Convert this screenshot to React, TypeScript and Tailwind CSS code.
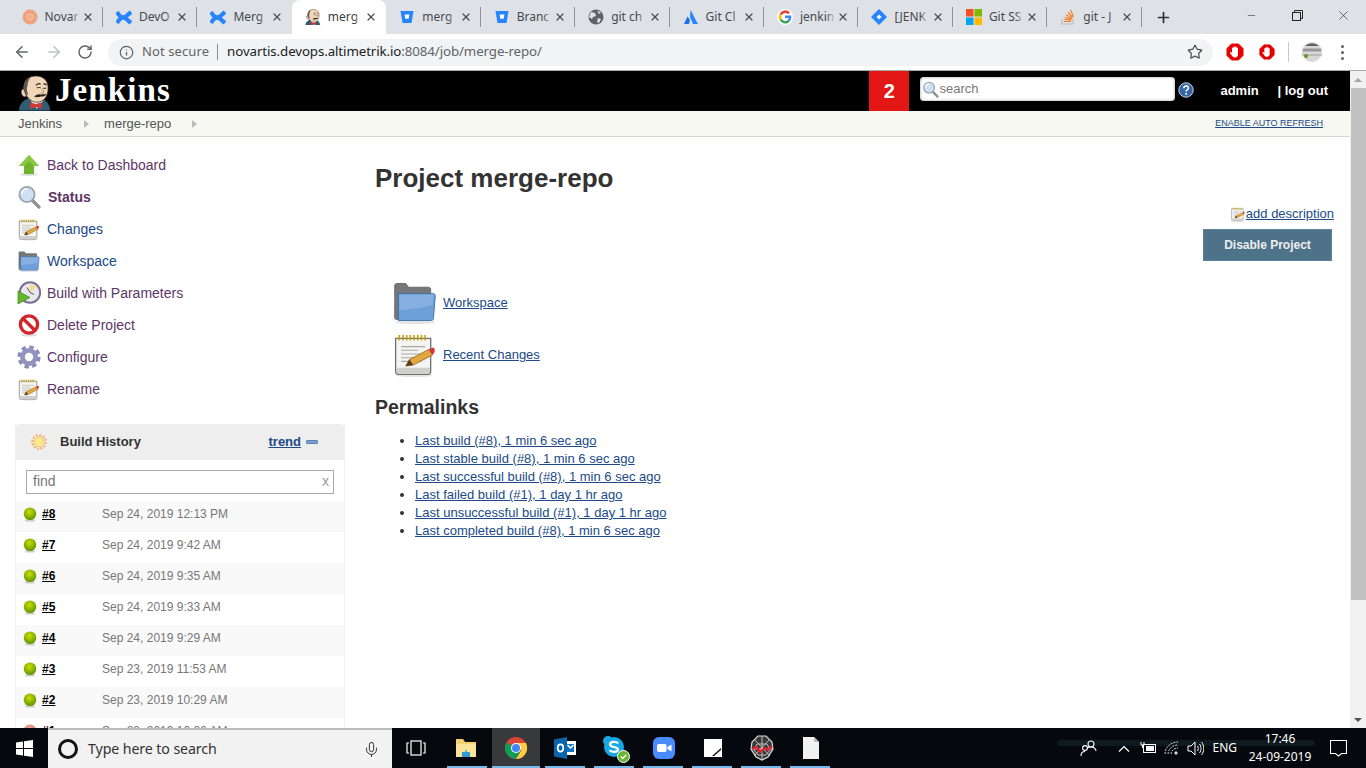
import React from "react"
import { ArrowLeft, ArrowRight, RotateCw, Info, Star, X, Plus, Minus, Mic } from "lucide-react"

const sans = "font-['Liberation_Sans',Arial,sans-serif]"
const ui = "font-['Noto_Sans',sans-serif]"

function Butler({ size = 36 }: { size?: number }) {
  return (
    <svg width={size} height={size * 1.05} viewBox="0 0 36 38">
      <path d="M1 38c0-7 4-11 10-13l14 0c5 2 9 6 9 13z" fill="#335c73" stroke="#1d3645" strokeWidth=".6" />
      <path d="M13 27h14l-7 9z" fill="#fff" />
      <path d="M13 29l6 2 6-2v7l-6-2-6 2z" fill="#d33833" />
      <path d="M7 15c-3-1-5 2-3 6 1 2 3 3 5 2z" fill="#f0d0b0" stroke="#2b2320" strokeWidth=".8" />
      <path d="M6 14C6 5 12 1 19 1c8 0 13 5 13 13 0 9-5 15-12 15-7 0-12-6-14-15z" fill="#f2d6b8" stroke="#2b2320" strokeWidth=".8" />
      <path d="M6 16C5 9 8 3 14 1.500c-3 3-4 7-4 10-1 2-1 6 1 10-3-1-4-3-5-5.500z" fill="#5d5651" />
      <path d="M19 11c2-2 4-2 5-1M27 10c1-1 3 0 3 1" stroke="#2b2320" strokeWidth="1.300" fill="none" />
      <path d="M20 14c1-1 3-1 4 0M27 14l3 0" stroke="#2b2320" strokeWidth="1.100" fill="none" />
      <path d="M26 14c0 2 2 4 1 5-1 1-2 1-3 0" stroke="#b8835f" strokeWidth="1" fill="none" />
      <path d="M17 23c3-2 5-3 7-2 2-1 4 0 6-1-1 3-4 3-6 3-2 1-5 1-7 0z" fill="#2b2320" />
    </svg>
  )
}

function GreenUp() {
  return (
    <svg width="24" height="24" viewBox="0 0 24 24">
      <ellipse cx="12" cy="21.500" rx="9" ry="1.500" fill="#ddd" />
      <path d="M12 2l10 11h-5v8H7v-8H2z" fill="#6fb52c" />
      <path d="M12 2l10 11h-5l-5-5-5 5H2z" fill="#8ac942" />
    </svg>
  )
}

function Magnifier({ size = 24 }: { size?: number }) {
  return (
    <svg width={size} height={size} viewBox="0 0 24 24">
      <path d="M14 14l8 8" stroke="#8a8f94" strokeWidth="3.200" strokeLinecap="round" />
      <circle cx="10" cy="9.500" r="7.600" fill="#cfe0f2" stroke="#9aa6b2" strokeWidth="1.800" />
      <path d="M5 9c0-3 2-5 5-5" stroke="#fff" strokeWidth="1.600" fill="none" />
    </svg>
  )
}

function Notepad({ size = 24 }: { size?: number }) {
  return (
    <svg width={size} height={size} viewBox="-2 -2 52 52">
      <ellipse cx="23" cy="47" rx="20" ry="2" fill="#e4e4e4" />
      <path d="M3 7h38v36c0 2-1 3-3 3H6c-2 0-3-1-3-3z" fill="#f4f4f2" stroke="#6f6f6f" strokeWidth="1.400" />
      <path d="M3.700 39h36.600v4c0 2-1 2.300-2.300 2.300H6c-1.500 0-2.300-.3-2.300-2.300z" fill="#cfcfcd" />
      <path d="M7 3.500v6M11 3.500v6M15 3.500v6M19 3.500v6M23 3.500v6M27 3.500v6M31 3.500v6M35 3.500v6" stroke="#c4a000" strokeWidth="1.700" />
      <path d="M9 16h26M9 20h18M9 24h26M9 28h14M9 32h22" stroke="#a8a8a8" strokeWidth="1.200" />
      <path d="M14 37l4-7 21-11 4 6-21 11z" fill="#e0a840" stroke="#8f5902" strokeWidth=".8" />
      <path d="M39 19l4-2c2 0 3 3 2 5l-2 3z" fill="#d9343a" />
      <path d="M14 37l4-7 4 6z" fill="#553a1e" />
    </svg>
  )
}

function Folder({ size = 24 }: { size?: number }) {
  return (
    <svg width={size} height={size} viewBox="-2 -2 52 52">
      <ellipse cx="24" cy="46" rx="22" ry="2" fill="#e4e4e4" />
      <path d="M2 6c0-1 1-2 2-2h10l3 4h22c1 0 2 1 2 2v33H4c-1 0-2-1-2-2z" fill="#75777a" stroke="#555" strokeWidth=".8" />
      <path d="M6 15h38c1 0 2 1 2 2l-2 25c0 1-1 2-2 2H6z" fill="#6f9fd8" stroke="#3e6fa8" strokeWidth="1" />
      <path d="M7 16h37l-1 11c-12 4-24 4-36 6z" fill="#86b0e0" />
    </svg>
  )
}

function BuildClock() {
  return (
    <svg width="24" height="24" viewBox="0 0 24 24">
      <circle cx="13" cy="11.500" r="10.200" fill="#e9e7ef" stroke="#77708f" strokeWidth="2" />
      <path d="M13 11.500V3.500a8 8 0 0 1 6 2.700z" fill="#f4dc80" />
      <path d="M13 11.500l4 2M13 11.500l-3-5" stroke="#555" strokeWidth="1" />
      <path d="M1 10l12 6.500L1 23z" fill="#62b52e" stroke="#3f8a12" strokeWidth=".7" />
    </svg>
  )
}

function NoSign() {
  return (
    <svg width="24" height="24" viewBox="0 0 24 24">
      <ellipse cx="12" cy="22" rx="8" ry="1.600" fill="#ddd" />
      <circle cx="12" cy="11.500" r="8.600" fill="#fff" stroke="#d3242a" strokeWidth="3.400" />
      <path d="M6 5.500l12 12" stroke="#d3242a" strokeWidth="3.400" />
    </svg>
  )
}

function Gear() {
  return (
    <svg width="24" height="24" viewBox="0 0 24 24">
      <circle cx="12" cy="12" r="9.400" fill="none" stroke="#8c8cb8" strokeWidth="4.400" strokeDasharray="4.200 3.180" />
      <circle cx="12" cy="12" r="6.600" fill="none" stroke="#9393bf" strokeWidth="4.800" />
      <circle cx="12" cy="12" r="3.600" fill="#fff" />
    </svg>
  )
}

function Sun() {
  return (
    <svg width="16" height="16" viewBox="0 0 16 16">
      <circle cx="8" cy="8" r="6.600" fill="none" stroke="#f6b26b" strokeWidth="2.400" strokeDasharray="2 1.450" />
      <circle cx="8" cy="8" r="4.600" fill="#fbe98a" stroke="#f2c76a" strokeWidth=".8" />
    </svg>
  )
}

function Ball({ red = false }: { red?: boolean }) {
  const id = red ? "ballRed" : "ballGreen"
  return (
    <svg width="14" height="15" viewBox="0 0 14 15" className="shrink-0 mt-[2px]">
      <defs>
        <radialGradient id={id} cx="45%" cy="35%" r="65%">
          <stop offset="0" stopColor={red ? "#f0a8a0" : "#c8e000"} />
          <stop offset="1" stopColor={red ? "#d87870" : "#5f9400"} />
        </radialGradient>
      </defs>
      <ellipse cx="7" cy="13.400" rx="5" ry="1.200" fill="#ccc" />
      <circle cx="7" cy="6.800" r="6.300" fill={`url(#${id})`} />
    </svg>
  )
}

/* tab favicons */
function Confluence() {
  return (
    <svg width="17" height="17" viewBox="0 0 16 16" fill="none" stroke="#2684ff" strokeWidth="4.200">
      <path d="M1 13.500c3-5 5-6 7-5.500s4 3 7 5.500" />
      <path d="M1 2.500c3 5 5 6 7 5.500s4-3 7-5.500" />
    </svg>
  )
}

function Bitbucket() {
  return (
    <svg width="16" height="16" viewBox="0 0 16 16">
      <path d="M1.500 2h13l-2 12h-9z" fill="#2684ff" />
      <path d="M5.600 5.500h4.800l-.7 4.200H6.300z" fill="#fff" />
    </svg>
  )
}

function TabIcon({ kind }: { kind: string }) {
  if (kind === "orange")
    return (
      <svg width="16" height="16" viewBox="0 0 16 16">
        <circle cx="8" cy="8" r="7.500" fill="#ee9f7c" />
        <circle cx="8" cy="8" r="3" fill="none" stroke="#f7c9b2" strokeWidth="1" />
        <path d="M8 1v14M1 8h14M3 3l10 10M13 3L3 13" stroke="#f4b699" strokeWidth=".6" />
      </svg>
    )
  if (kind === "confluence") return <Confluence />
  if (kind === "jenkins") return <Butler size={16} />
  if (kind === "bitbucket") return <Bitbucket />
  if (kind === "globe")
    return (
      <svg width="16" height="16" viewBox="0 0 16 16">
        <circle cx="8" cy="8" r="7.500" fill="#5f6368" />
        <path d="M3 3l4 1 1 3-3 1-1 2-3-2zM10 9l3 1-2 4-2-1zM9 1.500l4 2-2 1.500z" fill="#dee1e6" />
      </svg>
    )
  if (kind === "atlassian")
    return (
      <svg width="16" height="16" viewBox="0 0 16 16">
        <path d="M7.500 1c2 3 4.500 9 7.500 14h-5l-3-7z" fill="#2684ff" />
        <path d="M4.500 7.500L1 15h5l1-4z" fill="#1f6fe0" />
      </svg>
    )
  if (kind === "google")
    return (
      <svg width="16" height="16" viewBox="0 0 16 16" fill="none" strokeWidth="2.600">
        <circle cx="8" cy="8" r="8" fill="#fff" />
        <path d="M12 4.400A5 5 0 0 0 3.700 5.500" stroke="#ea4335" />
        <path d="M3.700 5.500a5 5 0 0 0 0 5" stroke="#fbbc05" />
        <path d="M3.700 10.500a5 5 0 0 0 8 1.300" stroke="#34a853" />
        <path d="M11.700 11.800A5 5 0 0 0 13 7.800H8" stroke="#4285f4" />
      </svg>
    )
  if (kind === "jira")
    return (
      <svg width="16" height="16" viewBox="0 0 16 16">
        <path d="M8 0l8 8-8 8-8-8z" fill="#2684ff" />
        <path d="M8 5.500L10.500 8 8 10.500 5.500 8z" fill="#fff" />
      </svg>
    )
  if (kind === "ms")
    return (
      <svg width="16" height="16" viewBox="0 0 16 16">
        <rect width="7.500" height="7.500" fill="#f25022" />
        <rect x="8.500" width="7.500" height="7.500" fill="#7fba00" />
        <rect y="8.500" width="7.500" height="7.500" fill="#00a4ef" />
        <rect x="8.500" y="8.500" width="7.500" height="7.500" fill="#ffb900" />
      </svg>
    )
  return (
    <svg width="16" height="16" viewBox="0 0 16 16" fill="none">
      <path d="M2 10v5h11v-5" stroke="#bcbbbb" strokeWidth="1.200" />
      <path d="M4 12.500h7M4.200 10.500l7 .6M4.800 8.300l6.800 1.800M6 5.800l6 3.400M8 3.500l4.800 5M10.500 1l3 6.500" stroke="#f48024" strokeWidth="1.200" />
    </svg>
  )
}

const tabs = [
  { icon: "orange", title: "Novar" },
  { icon: "confluence", title: "DevO" },
  { icon: "confluence", title: "Merg" },
  { icon: "jenkins", title: "merg", active: true },
  { icon: "bitbucket", title: "merg" },
  { icon: "bitbucket", title: "Branc" },
  { icon: "globe", title: "git ch" },
  { icon: "atlassian", title: "Git Cl" },
  { icon: "google", title: "jenkin" },
  { icon: "jira", title: "[JENK" },
  { icon: "ms", title: "Git SS" },
  { icon: "so", title: "git - J" },
]

function TabStrip() {
  return (
    <div className={`h-[34px] shrink-0 bg-[#dee1e6] flex items-end pl-[8.5px] ${ui}`}>
      {tabs.map((t, i) => {
        const hideSep = t.active || tabs[i + 1]?.active
        return (
          <div
            key={i}
            className={`w-[94.45px] h-[34px] flex items-center pl-[13px] pr-[9px] ${t.active ? "bg-white rounded-t-[8px]" : ""}`}
          >
            <div className="w-[16px] h-[16px] shrink-0 flex items-center justify-center">
              <TabIcon kind={t.icon} />
            </div>
            <div className={`relative w-[36px] ml-[7px] whitespace-nowrap text-[12px] ${t.active ? "text-[#3c4043]" : "text-[#45494e]"}`}>
              {t.title}
              <div className={`absolute inset-y-0 right-0 w-[10px] bg-linear-to-r from-transparent ${t.active ? "to-white" : "to-[#dee1e6]"}`} />
            </div>
            <X size={12} strokeWidth={2.4} className="ml-auto text-[#4a4d51] shrink-0" />
            {!hideSep && <div className="w-px h-[20px] bg-[#8f9297] ml-[8px] mr-[-9px] shrink-0" />}
          </div>
        )
      })}
      <div className="h-[34px] w-[30px] ml-[7px] flex items-center justify-center text-[#2f3134]">
        <Plus size={17} strokeWidth={2.4} />
      </div>
      <div className="ml-auto h-[34px] flex items-start text-[#222]">
        <div className="w-[46px] h-[30px] flex items-center justify-center">
          <Minus size={11} strokeWidth={1.2} />
        </div>
        <div className="w-[46px] h-[30px] flex items-center justify-center">
          <svg width="11" height="11" viewBox="0 0 11 11" fill="none" stroke="#222" strokeWidth="1">
            <rect x="0.500" y="2.500" width="8" height="8" />
            <path d="M2.500 2.500v-2h8v8h-2" />
          </svg>
        </div>
        <div className="w-[46px] h-[30px] flex items-center justify-center">
          <X size={15} strokeWidth={1} />
        </div>
      </div>
    </div>
  )
}

function StopHand({ size = 18 }: { size?: number }) {
  return (
    <svg width={size} height={size} viewBox="0 0 18 18">
      <path d="M5.500 1h7L17 5.500v7L12.500 17h-7L1 12.500v-7z" fill="#e60000" stroke="#e60000" />
      <path
        d="M6 8V5a.8.8 0 0 1 1.500 0V4a.8.8 0 0 1 1.500 0v0a.8.8 0 0 1 1.500 0V5a.8.8 0 0 1 1.500 0v6c0 2-1 3.500-3 3.500-2 0-2.500-1-3.500-2.500L4 10c-.5-1 .7-1.500 1.300-.7L6 10z"
        fill="#fff"
      />
    </svg>
  )
}

function Toolbar() {
  return (
    <div className={`h-[37px] shrink-0 bg-white flex items-center border-b border-[#a8a8a8] ${ui}`}>
      <div className="w-[108px] flex items-center pl-[13px] gap-[14px] shrink-0">
        <ArrowLeft size={18} strokeWidth={2} className="text-[#5f6368]" />
        <ArrowRight size={18} strokeWidth={2} className="text-[#bdc1c6]" />
        <RotateCw size={16} strokeWidth={2.2} className="text-[#5f6368]" />
      </div>
      <div className="w-[1105px] h-[27px] rounded-full bg-[#f1f3f4] flex items-center shrink-0">
        <Info size={15} strokeWidth={2} className="ml-[11px] text-[#5f6368] shrink-0" />
        <span className="ml-[8px] text-[13px] text-[#5f6368] tracking-[0.1px]">Not secure</span>
        <div className="w-px h-[16px] bg-[#8a8d91] ml-[8px]" />
        <span className="ml-[9px] text-[13.3px] text-[#202124] tracking-[-0.1px] whitespace-nowrap">
          novartis.devops.altimetrik.io<span className="text-[#5f6368]">:8084/job/merge-repo/</span>
        </span>
        <Star size={16} strokeWidth={1.8} className="ml-auto mr-[10px] text-[#4a4d51]" />
      </div>
      <div className="flex items-center flex-1 pl-[13px]">
        <StopHand />
        <div className="ml-[15px]">
          <StopHand size={16} />
        </div>
        <div className="w-px h-[20px] bg-[#c8c8c8] ml-[13px]" />
        <svg width="20" height="20" viewBox="0 0 20 20" className="ml-[13px]">
          <circle cx="10" cy="10" r="10" fill="#d8d8d6" />
          <path d="M3 4a10 10 0 0 1 14 0z" fill="#5f5f5f" />
          <path d="M1 6.500h18l.6 3H.4z" fill="#999" />
          <path d="M0 12h20l-.5 2H.5z" fill="#bbb" />
          <circle cx="4" cy="14" r="2" fill="#5a9a2a" />
        </svg>
        <div className="ml-[19px] flex flex-col gap-[3px]">
          <div className="w-[3px] h-[3px] rounded-full bg-[#5f6368]" />
          <div className="w-[3px] h-[3px] rounded-full bg-[#5f6368]" />
          <div className="w-[3px] h-[3px] rounded-full bg-[#5f6368]" />
        </div>
      </div>
    </div>
  )
}

function JenkinsHeader() {
  return (
    <div className={`h-[40px] shrink-0 bg-black flex items-center text-white ${sans}`}>
      <div className="ml-[18px] h-[40px] flex items-end">
        <Butler size={34} />
      </div>
      <span className="ml-[3px] mt-[-3px] font-['Liberation_Serif',serif] font-bold text-[33px] leading-[40px] tracking-[1.1px]">Jenkins</span>
      <div className="ml-auto w-[40px] h-[40px] bg-[#e41717] flex items-center justify-center font-bold text-[20px]">2</div>
      <div className="ml-[11px] w-[255px] h-[24px] bg-white rounded-[4px] flex items-center pl-[2px] shadow-[inset_0_0_3px_#999] mt-[-4px]">
        <Magnifier size={17} />
        <span className="text-[13px] text-[#777]">search</span>
      </div>
      <svg width="16" height="16" viewBox="0 0 16 16" className="ml-[3px] mt-[-3px]">
        <circle cx="8" cy="8" r="7.200" fill="#3465a4" stroke="#c8d4e6" strokeWidth="1" />
        <path d="M5.800 6.200c0-3 4.600-3 4.600-.2 0 2-2.300 1.800-2.300 3.600" fill="none" stroke="#fff" strokeWidth="1.600" />
        <circle cx="8.100" cy="11.800" r="1" fill="#fff" />
      </svg>
      <span className="ml-[26px] font-bold text-[13px] w-[57px]">admin</span>
      <span className="font-bold text-[13px] mr-[22px]">| log out</span>
    </div>
  )
}

function Breadcrumb() {
  const Tri = () => <div className="w-0 h-0 border-y-[4px] border-y-transparent border-l-[5px] border-l-[#bbb]" />
  return (
    <div className={`h-[26px] shrink-0 bg-[#f6f8f1] border-b border-[#d3d7cf] flex items-center pl-[18px] pr-[27px] text-[13px] text-[#555] ${sans}`}>
      <span>Jenkins</span>
      <div className="ml-[22px] mr-[15px]"><Tri /></div>
      <span>merge-repo</span>
      <div className="ml-[21px]"><Tri /></div>
      <a className="ml-auto text-[9px] text-[#204a87] underline">ENABLE AUTO REFRESH</a>
    </div>
  )
}

const sideItems = [
  { icon: <GreenUp />, label: "Back to Dashboard", color: "text-[#5c3566]" },
  { icon: <Magnifier />, label: "Status", color: "text-[#5c3566] font-bold pl-[1px]" },
  { icon: <Notepad />, label: "Changes", color: "text-[#204a87]" },
  { icon: <Folder />, label: "Workspace", color: "text-[#204a87]" },
  { icon: <BuildClock />, label: "Build with Parameters", color: "text-[#5c3566]" },
  { icon: <NoSign />, label: "Delete Project", color: "text-[#5c3566]" },
  { icon: <Gear />, label: "Configure", color: "text-[#5c3566]" },
  { icon: <Notepad />, label: "Rename", color: "text-[#5c3566]" },
]

const builds = [
  { n: "#8", d: "Sep 24, 2019 12:13 PM" },
  { n: "#7", d: "Sep 24, 2019 9:42 AM" },
  { n: "#6", d: "Sep 24, 2019 9:35 AM" },
  { n: "#5", d: "Sep 24, 2019 9:33 AM" },
  { n: "#4", d: "Sep 24, 2019 9:29 AM" },
  { n: "#3", d: "Sep 23, 2019 11:53 AM" },
  { n: "#2", d: "Sep 23, 2019 10:29 AM" },
  { n: "#1", d: "Sep 23, 2019 10:26 AM", red: true },
]

function Sidebar() {
  return (
    <div className="w-[345px] shrink-0 pl-[15px] pt-[12px]">
      {sideItems.map((it) => (
        <div key={it.label} className="h-[32px] flex items-center pl-[2px]">
          <div className="w-[24px] h-[24px] shrink-0">{it.icon}</div>
          <span className={`ml-[6px] text-[14px] ${it.color}`}>{it.label}</span>
        </div>
      ))}
      <div className="mt-[19px] border-x border-[#f0f0f0]">
        <div className="h-[36px] bg-[#eeeeee] rounded-t-[5px] flex items-center pl-[16px] mx-[-1px]">
          <Sun />
          <span className="ml-[13px] text-[13px] font-bold text-[#333]">Build History</span>
          <a className="ml-auto text-[13px] font-bold text-[#204a87] underline">trend</a>
          <div className="ml-[5px] mr-[27px] w-[12px] h-[4px] rounded-[1px] bg-[#7ea1cc] border border-[#5d83b3]" />
        </div>
        <div className="h-[41px] flex items-start pl-[10px] pt-[10px] pr-[10px]">
          <div className="w-full h-[24px] border border-[#aaaaaa] flex items-center justify-between pl-[6px] pr-[4px] pb-[1px] text-[14px] text-[#777]">
            <span>find</span>
            <span className="text-[#999]">x</span>
          </div>
        </div>
        {builds.map((b, i) => (
          <div key={b.n} className={`h-[31px] flex items-start pt-[4px] pl-[7px] text-[12px] ${i % 2 === 0 ? "bg-[#f9f9f9]" : "bg-white"}`}>
            <Ball red={b.red} />
            <a className="ml-[5px] w-[60px] font-bold text-black underline">{b.n}</a>
            <span className="text-[#777]">{b.d}</span>
          </div>
        ))}
      </div>
    </div>
  )
}

const permalinks = [
  "Last build (#8), 1 min 6 sec ago",
  "Last stable build (#8), 1 min 6 sec ago",
  "Last successful build (#8), 1 min 6 sec ago",
  "Last failed build (#1), 1 day 1 hr ago",
  "Last unsuccessful build (#1), 1 day 1 hr ago",
  "Last completed build (#8), 1 min 6 sec ago",
]

function MainPanel() {
  return (
    <div className="flex-1 min-w-0 pl-[30px] pr-[16px] pt-[26px]">
      <h1 className="text-[26px] leading-[30px] font-bold text-[#333]">Project merge-repo</h1>
      <div className="mt-[12px] h-[18px] flex items-center justify-end">
        <Notepad size={16} />
        <a className="text-[13px] text-[#204a87] underline">add description</a>
      </div>
      <div className="mt-[6px] flex justify-end pr-[2px]">
        <div className="w-[129px] h-[32px] bg-[#4d728a] border border-[#5d8299] flex items-center justify-center text-[12px] font-bold text-[#eeeeee]">
          Disable Project
        </div>
      </div>
      <div className="mt-[15px] h-[52px] flex items-center pl-[16px]">
        <Folder size={48} />
        <a className="ml-[4px] pt-[2px] text-[13px] text-[#204a87] underline">Workspace</a>
      </div>
      <div className="h-[52px] flex items-center pl-[16px]">
        <Notepad size={48} />
        <a className="ml-[4px] pt-[2px] text-[13px] text-[#204a87] underline">Recent Changes</a>
      </div>
      <h2 className="mt-[15px] text-[19.500px] leading-[24px] font-bold text-[#333]">Permalinks</h2>
      <ul className="mt-[13px] list-disc pl-[40px] text-[#333]">
        {permalinks.map((p) => (
          <li key={p} className="h-[18px] leading-[18px] text-[13px]">
            <a className="text-[#204a87] underline">{p}</a>
          </li>
        ))}
      </ul>
    </div>
  )
}

function Scrollbar() {
  return (
    <div className="w-[16px] shrink-0 bg-[#f1f1f1] flex flex-col items-center">
      <div className="h-[17px] flex items-center justify-center">
        <div className="w-0 h-0 border-x-[4px] border-x-transparent border-b-[4px] border-b-[#a3a3a3]" />
      </div>
      <div className="w-[15px] ml-[1px] h-[512px] bg-[#c1c1c1]" />
      <div className="mt-auto h-[17px] flex items-center justify-center">
        <div className="w-0 h-0 border-x-[4px] border-x-transparent border-t-[4px] border-t-[#505050]" />
      </div>
    </div>
  )
}

/* taskbar icons */
function ChromeIcon() {
  return (
    <svg width="24" height="24" viewBox="0 0 24 24">
      <circle cx="12" cy="12" r="11" fill="#db4437" />
      <path d="M12 12L2.500 6.500A11 11 0 0 0 12 23l5-9z" fill="#0f9d58" />
      <path d="M12 7h10a11 11 0 0 1-10 16l5.500-9z" fill="#ffcd40" />
      <circle cx="12" cy="12" r="5" fill="#fff" />
      <circle cx="12" cy="12" r="4" fill="#4285f4" />
    </svg>
  )
}

function OutlookIcon() {
  return (
    <svg width="24" height="24" viewBox="0 0 24 24">
      <path d="M12 5h11v14H12z" fill="#fff" />
      <path d="M14 8h7v8h-7z" fill="#1173c5" />
      <path d="M14.500 9l3 3 3-3" stroke="#fff" strokeWidth="1.500" fill="none" />
      <path d="M1 3.500L14 1v22L1 20.500z" fill="#0a64ad" />
      <ellipse cx="7.500" cy="12" rx="2.800" ry="3.600" fill="none" stroke="#fff" strokeWidth="1.700" />
    </svg>
  )
}

function SkypeIcon() {
  return (
    <div className="relative w-[26px] h-[26px]">
      <svg width="24" height="24" viewBox="0 0 24 24">
        <circle cx="12" cy="12" r="10" fill="#1aa7e6" />
        <circle cx="6" cy="6" r="5" fill="#1aa7e6" />
        <circle cx="18" cy="18" r="5" fill="#1aa7e6" />
        <path d="M16 8.500c-1-2-8-2.500-8 1 0 3.500 8 1.500 8 5 0 3-7 3-8.500.5" fill="none" stroke="#fff" strokeWidth="2.200" />
      </svg>
      <svg width="13" height="13" viewBox="0 0 13 13" className="absolute right-[-2px] bottom-[-2px]">
        <circle cx="6.500" cy="6.500" r="6" fill="#6ab42f" stroke="#fff" strokeWidth="1" />
        <path d="M3.800 6.500l2 2 3.500-3.800" stroke="#fff" strokeWidth="1.300" fill="none" />
      </svg>
    </div>
  )
}

function ZoomIcon() {
  return (
    <svg width="24" height="24" viewBox="0 0 24 24">
      <rect x="1" y="1" width="22" height="22" rx="6" fill="#4a8cff" />
      <rect x="5" y="8" width="9.500" height="8" rx="1.800" fill="#fff" />
      <path d="M15.500 11l4-2.500v7l-4-2.500z" fill="#fff" />
    </svg>
  )
}

function SpiderIcon() {
  return (
    <svg width="24" height="28" viewBox="0 0 24 28" fill="none">
      <path d="M8 2h8l6 6 1 7-5 8-6 3-6-3-5-8 1-7z" fill="#3a3a3a" stroke="#ddd" strokeWidth="1.200" />
      <path d="M12 2v24M1 15h22M4 5l16 17M20 5L4 22M7 10h10l3 6-4 5H8l-4-5z" stroke="#ccc" strokeWidth=".9" />
      <path d="M2 15l5-2 3 5 5-4 3 2 4-4" stroke="#ee1c25" strokeWidth="2" />
    </svg>
  )
}

const running = [
  { x: "w-[40px] ml-[447px]" },
  { x: "w-[48px] ml-[5px]" },
  { x: "w-[40px] ml-[5px]" },
  { x: "w-[40px] ml-[9px]" },
  { x: "w-[40px] ml-[9px]" },
  { x: "w-[40px] ml-[9px]" },
  { x: "w-[40px] ml-[9px]" },
  { x: "w-[40px] ml-[9px]" },
]

function Taskbar() {
  const slot = "h-[40px] flex items-center justify-center"
  return (
    <div className={`relative h-[40px] shrink-0 bg-[#05090d] flex text-white ${ui}`}>
      <div className={`w-[48px] ${slot}`}>
        <svg width="17" height="17" viewBox="0 0 17 17" fill="#fff">
          <path d="M0 2.500l7-1v6.500H0zM8 1.300L17 0v8H8zM0 9h7v6.500l-7-1zM8 9h9v8l-9-1.300z" />
        </svg>
      </div>
      <div className="w-[344px] h-[40px] bg-[#f2f2f2] border-t-2 border-[#bdbdbd] flex items-center">
        <div className="ml-[10px] w-[20px] h-[20px] rounded-full border-[3px] border-[#111]" />
        <span className="ml-[10px] text-[14.200px] text-[#333] tracking-[-0.1px]">Type here to search</span>
        <Mic size={17} strokeWidth={1.4} className="ml-auto mr-[12px] text-[#333]" />
      </div>
      <div className={`w-[48px] ${slot}`}>
        <svg width="20" height="16" viewBox="0 0 20 16" fill="none" stroke="#fff" strokeWidth="1.200">
          <rect x="5" y="1" width="10" height="14" />
          <path d="M3 3H1v10h2M17 3h2v10h-2" />
        </svg>
      </div>
      <div className={`w-[52px] ${slot}`}>
        <svg width="22" height="22" viewBox="0 0 22 22">
          <path d="M1 2h7l2 3h11v15H1z" fill="#f4d06f" />
          <path d="M1 7h20v13H1z" fill="#fbe39a" />
          <path d="M7 20v-5h3l1-3 1 3h3v5z" fill="#2e9bd6" />
        </svg>
      </div>
      <div className={`w-[48px] bg-[#38393b] ${slot}`}><ChromeIcon /></div>
      <div className={`w-[50px] ${slot}`}><OutlookIcon /></div>
      <div className={`w-[49px] ${slot}`}><SkypeIcon /></div>
      <div className={`w-[49px] ${slot}`}><ZoomIcon /></div>
      <div className={`w-[49px] ${slot}`}>
        <svg width="18" height="18" viewBox="0 0 18 18">
          <path d="M0 0h18v10l-8 8H0z" fill="#fff" />
          <path d="M8 17l9-8v8z" fill="#111" />
          <path d="M9 18l9-8v8z" fill="#fff" />
        </svg>
      </div>
      <div className={`w-[49px] ${slot}`}><SpiderIcon /></div>
      <div className={`w-[49px] ${slot}`}>
        <svg width="16" height="22" viewBox="0 0 16 22">
          <path d="M0 0h11l5 5v17H0z" fill="#f2f2f2" />
          <path d="M11 0v5h5z" fill="#bbb" />
        </svg>
      </div>
      <div className="flex-1 flex items-center justify-end h-[40px] pl-[240px] relative">
        <div className="absolute left-[222px] top-[12px] w-[258px] h-[6px] rounded-full bg-[#0e1a20]" />
        <svg width="18" height="18" viewBox="0 0 18 18" fill="none" stroke="#fff" strokeWidth="1.100" className="relative shrink-0">
          <circle cx="11" cy="5" r="3" />
          <circle cx="5" cy="9" r="2.400" />
          <path d="M1 17c0-3 2-4.500 4-4.500M7 9c2-1 3-1 4-1 3 0 5 2 5 4" />
        </svg>
        <svg width="12" height="7" viewBox="0 0 12 7" fill="none" stroke="#fff" strokeWidth="1.200" className="relative ml-[20px] shrink-0">
          <path d="M1 6.500l5-5 5 5" />
        </svg>
        <svg width="17" height="14" viewBox="0 0 17 14" className="relative ml-[10px] shrink-0">
          <rect x="3.500" y="3.500" width="12" height="8" fill="none" stroke="#fff" />
          <rect x="6" y="5" width="8" height="5" fill="#fff" />
          <path d="M1 1v3h3V1M2.500 4v3" stroke="#fff" fill="none" />
        </svg>
        <svg width="15" height="14" viewBox="0 0 15 14" fill="none" stroke="#ccc" strokeWidth="1" className="relative ml-[7px] shrink-0">
          <path d="M1 13C1 6 7 1 14 1M4 13c0-5 5-9 10-9M7 13c0-3 3-6 7-6" strokeDasharray="2 1" />
          <circle cx="12" cy="12" r="1.200" fill="#fff" />
        </svg>
        <svg width="17" height="15" viewBox="0 0 17 15" fill="none" stroke="#fff" strokeWidth="1" className="relative ml-[8px] shrink-0">
          <path d="M1 5h3l4-4v13l-4-4H1zM10.500 5c1 1.500 1 3.500 0 5M12.500 3c2 2.500 2 6.500 0 9M14.500 1c3 3.500 3 9.500 0 13" />
        </svg>
        <span className="relative ml-[8px] text-[12px] shrink-0">ENG</span>
        <div className="relative ml-[13px] w-[60px] flex flex-col items-center text-[12px] leading-[18px] whitespace-nowrap shrink-0">
          <span>17:46</span>
          <span>24-09-2019</span>
        </div>
        <div className="w-[56px] shrink-0 flex justify-center pl-[1px]">
          <svg width="17" height="17" viewBox="0 0 17 17" fill="none" stroke="#fff" strokeWidth="1.100">
            <path d="M.5.500h16v13h-5L8.500 16l-3-2.500h-5z" />
          </svg>
        </div>
      </div>
      <div className="absolute bottom-0 left-0 right-0 h-[2px] flex">
        {running.map((r, i) => (
          <div key={i} className={`h-[2px] bg-[#76b9ed] shrink-0 ${r.x}`} />
        ))}
      </div>
    </div>
  )
}

export default function App() {
  return (
    <div className={`h-screen w-full flex flex-col overflow-hidden bg-white ${sans}`}>
      <TabStrip />
      <Toolbar />
      <div className="flex-1 min-h-0 flex overflow-hidden">
        <div className="flex-1 min-w-0 flex flex-col overflow-hidden">
          <JenkinsHeader />
          <Breadcrumb />
          <div className="flex-1 min-h-0 flex overflow-hidden">
            <Sidebar />
            <MainPanel />
          </div>
        </div>
        <Scrollbar />
      </div>
      <Taskbar />
    </div>
  )
}
